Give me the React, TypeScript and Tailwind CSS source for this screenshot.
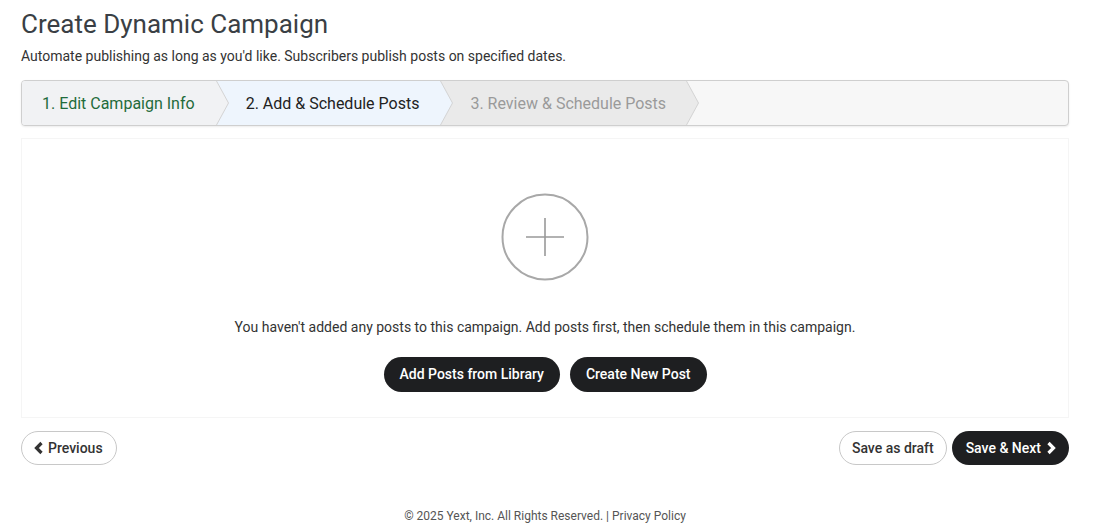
import React from "react";

function Chevron({ bg, fill }: { bg: string; fill: string }) {
  return (
    <div className="h-full w-[13px] shrink-0" style={{ background: bg }}>
      <svg width="13" height="44" viewBox="0 0 13 44" className="block">
        <polygon points="0,0 0.5,0 12.5,22 0.5,44 0,44" fill={fill} />
        <polyline points="0.5,0 12.5,22 0.5,44" fill="none" stroke="#d4d4d4" strokeWidth="1" />
      </svg>
    </div>
  );
}

function ArrowLeft() {
  return (
    <svg width="10" height="14" viewBox="0 0 10 14" className="block">
      <polyline points="7.5,2 2.5,7 7.5,12" fill="none" stroke="currentColor" strokeWidth="3.2" strokeLinecap="butt" strokeLinejoin="miter" />
    </svg>
  );
}

function ArrowRight() {
  return (
    <svg width="10" height="14" viewBox="0 0 10 14" className="block">
      <polyline points="2.5,2 7.5,7 2.5,12" fill="none" stroke="currentColor" strokeWidth="3.2" strokeLinecap="butt" strokeLinejoin="miter" />
    </svg>
  );
}

export default function App() {
  return (
    <div
      className="min-h-[531px] bg-white px-[21px] pt-[8px] text-[#333]"
      style={{ fontFamily: "Roboto, 'Liberation Sans', sans-serif" }}
    >
      <h1 className="text-[26px] leading-[32px] font-normal text-[#3a3f45]">Create Dynamic Campaign</h1>
      <p className="mt-[6px] text-[14px] leading-[20px] text-[#333]">
        Automate publishing as long as you'd like. Subscribers publish posts on specified dates.
      </p>

      <div className="mt-[14px] flex h-[46px] w-[1048px] overflow-hidden rounded-[4px] border border-[#cfcfcf] bg-[#f7f7f7] shadow-[0_1px_2px_rgba(0,0,0,0.08)]">
        <div className="flex h-full items-center bg-[#f1f2f4] pl-[20px] pr-[21px] pt-[1px] text-[16px] text-[#1f6b3b]">
          1. Edit Campaign Info
        </div>
        <Chevron bg="#eef5fd" fill="#f1f2f4" />
        <div className="flex h-full items-center bg-[#eef5fd] pl-[17px] pr-[21px] pt-[1px] text-[16px] text-[#222]">
          2. Add &amp; Schedule Posts
        </div>
        <Chevron bg="#eaeaea" fill="#eef5fd" />
        <div className="flex h-full items-center bg-[#eaeaea] pl-[17px] pr-[20px] pt-[1px] text-[16px] text-[#9a9a9a]">
          3. Review &amp; Schedule Posts
        </div>
        <Chevron bg="#f7f7f7" fill="#eaeaea" />
        <div className="flex-1" />
      </div>

      <div className="mt-[12px] flex h-[280px] w-[1048px] flex-col items-center border border-[#f5f5f5] pt-[54px]">
        <svg width="88" height="88" viewBox="0 0 88 88" className="block">
          <circle cx="44" cy="44" r="42.5" fill="none" stroke="#a8a8a8" strokeWidth="2" />
          <line x1="25" y1="44" x2="63" y2="44" stroke="#999" strokeWidth="1.6" />
          <line x1="44" y1="25" x2="44" y2="63" stroke="#999" strokeWidth="1.6" />
        </svg>
        <p className="mt-[36px] text-[14px] leading-[20px] text-[#333]">
          You haven't added any posts to this campaign. Add posts first, then schedule them in this campaign.
        </p>
        <div className="mt-[20px] flex gap-[10px]">
          <button className="h-[35px] rounded-full bg-[#1e1f21] px-[16px] text-[14px] font-medium text-white">
            Add Posts from Library
          </button>
          <button className="h-[35px] rounded-full bg-[#1e1f21] px-[16px] text-[14px] font-medium text-white">
            Create New Post
          </button>
        </div>
      </div>

      <div className="mt-[13px] flex w-[1048px] items-center justify-between">
        <button className="flex h-[34px] items-center gap-[4px] rounded-full border border-[#c8c8c8] bg-white pl-[12px] pr-[13px] text-[14px] font-medium text-[#333]">
          <ArrowLeft />
          Previous
        </button>
        <div className="flex gap-[5px]">
          <button className="h-[34px] rounded-full border border-[#c8c8c8] bg-white px-[12px] text-[14px] font-medium text-[#333]">
            Save as draft
          </button>
          <button className="flex h-[34px] items-center gap-[5px] rounded-full bg-[#1e1f21] pl-[14px] pr-[13px] text-[14px] font-medium text-white">
            Save &amp; Next
            <ArrowRight />
          </button>
        </div>
      </div>

      <footer className="mt-[43px] w-[1048px] text-center text-[12px] leading-[16px] text-[#555]">
        © 2025 Yext, Inc. All Rights Reserved. | <span className="text-[#555]">Privacy Policy</span>
      </footer>
    </div>
  );
}
